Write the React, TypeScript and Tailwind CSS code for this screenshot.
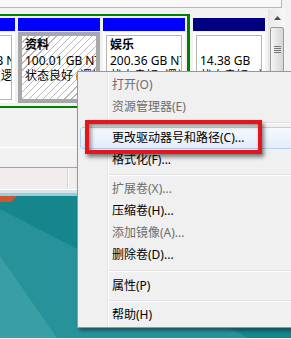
const hatch =
  'bg-[repeating-linear-gradient(135deg,#ffffff_0px,#ffffff_4px,#b8b8b8_4px,#b8b8b8_5px)]';

type Vol = { name: string; size: string; status: string };

function VolumeBox({ vol, selected }: { vol: Vol; selected?: boolean }) {
  const lines = (
    <div className="pl-[3px] pt-[1px] leading-[15.5px] whitespace-nowrap overflow-hidden text-black">
      <div className="font-bold">{vol.name || '\u00a0'}</div>
      <div>{vol.size}</div>
      <div>{vol.status}</div>
    </div>
  );
  if (selected) {
    return <div className={`mt-[1px] h-[71px] border-4 border-[#a7a7a7] overflow-hidden ${hatch}`}>{lines}</div>;
  }
  return (
    <div className="mt-[1px] h-[71px] bg-white p-[3px]">
      <div className="h-full border border-[#b5b5b5] overflow-hidden">{lines}</div>
    </div>
  );
}

type Item = { label: string; disabled?: boolean; active?: boolean } | { sep: 7 | 9 };

const items: Item[] = [
  { label: '打开(O)', disabled: true },
  { label: '资源管理器(E)', disabled: true },
  { sep: 9 },
  { label: '更改驱动器号和路径(C)...', active: true },
  { label: '格式化(F)...' },
  { sep: 7 },
  { label: '扩展卷(X)...', disabled: true },
  { label: '压缩卷(H)...' },
  { label: '添加镜像(A)...', disabled: true },
  { label: '删除卷(D)...' },
  { sep: 9 },
  { label: '属性(P)' },
  { sep: 7 },
  { label: '帮助(H)' },
];

function ContextMenu() {
  return (
    <div className="absolute left-[77px] top-[71px] w-[222px] border border-[#979797] bg-[linear-gradient(to_right,#f0f0f0_29px,#e2e3e3_29px,#e2e3e3_30px,#ffffff_30px,#ffffff_31px,#f0f0f0_31px)] pl-[2px] pt-[2px] pb-[1px] shadow-[2px_3px_3px_rgba(0,0,0,0.35)]">
      {items.map((it, i) => {
        if ('sep' in it) {
          return (
            <div key={i} className={it.sep === 9 ? 'h-[9px] pt-[4px]' : 'h-[7px] pt-[3px]'}>
              <div className="ml-[29px] h-[1px] bg-[#e0e0e0]" />
              <div className="ml-[29px] h-[1px] bg-white" />
            </div>
          );
        }
        if (it.active) {
          return (
            <div
              key={i}
              className="h-[22px] rounded-[3px] border border-[#b3d0f2] bg-[linear-gradient(to_bottom,#f5f9fe,#e3edf9)] pl-[31px] leading-[20px] text-black whitespace-nowrap"
            >
              {it.label}
            </div>
          );
        }
        return (
          <div
            key={i}
            className={`h-[22px] pl-[32px] leading-[22px] whitespace-nowrap ${it.disabled ? 'text-[#6d6d6d]' : 'text-black'}`}
          >
            {it.label}
          </div>
        );
      })}
    </div>
  );
}

function Scrollbar() {
  return (
    <div className="ml-[3px] -mt-[5px] w-[17px] h-[99px] bg-[linear-gradient(to_right,#e9e9e9,#f7f7f7)] border-l border-[#e3e3e3]">
      <div className="h-[18px] flex items-center justify-center">
        <svg width="7" height="4" viewBox="0 0 7 4">
          <path d="M0 4 L3.5 0 L7 4 Z" fill="#4d4d4d" />
        </svg>
      </div>
      <div className="mx-[1px] h-[80px] rounded-[2px] border border-[#9a9a9a] bg-[linear-gradient(to_right,#f6f6f6,#e4e4e4_50%,#d6d6d6)] flex flex-col items-center pt-[18px] gap-[1px]">
        {[0, 1, 2, 3].map((k) => (
          <div key={k} className="w-[7px] h-[1px] bg-[#777]" />
        ))}
      </div>
    </div>
  );
}

export default function App() {
  return (
    <div className="relative w-[291px] h-[339px] overflow-hidden bg-[#f2f2f2] font-['Noto_Sans','Noto_Sans_CJK_SC',sans-serif] text-[12px]">
      <div className="flex flex-col h-full">
        {/* upper list strip */}
        <div className="h-[8px] w-[282px] border-b border-r border-[#b7b7b7] bg-[#f8f8f8]" />

        {/* disk row */}
        <div className="mt-[6px] flex items-start h-[94px]">
          <div className="-ml-[61px] flex gap-[3px] border-t-2 border-r-[3px] border-b-2 border-[#008000] pt-[2px] pr-[2px] pb-[3px]">
            <div className="w-[76px]">
              <div className="h-[13px] bg-[#0000ff]" />
              <VolumeBox vol={{ name: '软件', size: '117.19 GB NTFS', status: '状态良好 (逻辑驱动器)' }} />
            </div>
            <div className="w-[82px]">
              <div className="h-[13px] bg-[#0000ff]" />
              <VolumeBox selected vol={{ name: '资料', size: '100.01 GB NTFS', status: '状态良好 (逻辑驱动器)' }} />
            </div>
            <div className="w-[82px]">
              <div className="h-[13px] bg-[#0000ff]" />
              <VolumeBox vol={{ name: '娱乐', size: '200.36 GB NTFS', status: '状态良好 (逻辑驱动器)' }} />
            </div>
          </div>
          <div className="ml-[3px] w-[72px] pt-[4px]">
            <div className="h-[13px] bg-[#000080]" />
            <VolumeBox vol={{ name: '', size: '14.38 GB', status: '状态良好 (主分区)' }} />
          </div>
          <Scrollbar />
        </div>

        {/* lower disk panel */}
        <div className="h-[40px] border-b border-white" />
        <div className="h-[19px]" />

        {/* status bar */}
        <div className="h-[22px] border-t border-[#a3a3a3] bg-[#f1eded] flex">
          <div className="w-[68px] border-r border-[#d6d2d2]" />
          <div className="w-[1px] bg-white" />
        </div>
        <div className="h-[1px] bg-white" />
        <div className="h-[3px] bg-[#d8e3e7]" />
        <div className="h-[3px] bg-[#93d1e1]" />

        {/* desktop */}
        <div className="flex-1">
          <svg width="291" height="142" viewBox="0 0 291 142" className="block">
            <rect x="0" y="0" width="291" height="142" fill="#15868c" />
            <polygon points="0,13 291,164 291,142 0,142" fill="#27929a" />
            <polygon points="0,60 57,142 0,142" fill="#3a9ea5" />
            <polygon points="0,0 17,0 11,6 0,6" fill="#cf5530" />
          </svg>
        </div>
      </div>

      <ContextMenu />

      {/* red highlight frame */}
      <div className="absolute left-[85px] top-[120px] w-[177px] h-[34px] border-4 border-[#e3161d] shadow-[2px_3px_4px_rgba(0,0,0,0.5),inset_2px_2px_4px_rgba(0,0,0,0.45)]" />
    </div>
  );
}
